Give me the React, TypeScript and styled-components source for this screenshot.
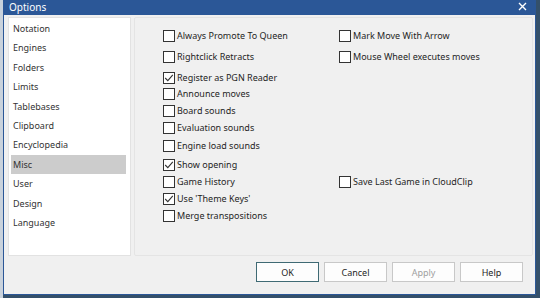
import { FunctionComponent } from "react";
import styled, { createGlobalStyle } from "styled-components";

const GlobalStyle = createGlobalStyle`
  html, body {
    margin: 0;
    padding: 0;
    background: #34506a;
    overflow: hidden;
  }
  * {
    box-sizing: border-box;
  }
`;

const pages = [
  "Notation",
  "Engines",
  "Folders",
  "Limits",
  "Tablebases",
  "Clipboard",
  "Encyclopedia",
  "Misc",
  "User",
  "Design",
  "Language",
];

interface IOption {
  label: string;
  checked?: boolean;
}

interface IRow {
  top: number;
  left: IOption;
  right?: IOption;
}

const rows: IRow[] = [
  {
    top: 11,
    left: { label: "Always Promote To Queen" },
    right: { label: "Mark Move With Arrow" },
  },
  {
    top: 8,
    left: { label: "Rightclick Retracts" },
    right: { label: "Mouse Wheel executes moves" },
  },
  { top: 8, left: { label: "Register as PGN Reader", checked: true } },
  { top: 3, left: { label: "Announce moves" } },
  { top: 4, left: { label: "Board sounds" } },
  { top: 4, left: { label: "Evaluation sounds" } },
  { top: 5, left: { label: "Engine load sounds" } },
  { top: 6, left: { label: "Show opening", checked: true } },
  {
    top: 4,
    left: { label: "Game History" },
    right: { label: "Save Last Game in CloudClip" },
  },
  { top: 4, left: { label: "Use 'Theme Keys'", checked: true } },
  { top: 4, left: { label: "Merge transpositions" } },
];

const CheckOption: FunctionComponent<IOption> = ({ label, checked }) => (
  <OptionLabel>
    <Box>
      {checked && (
        <svg width="10" height="10" viewBox="0 0 10 10">
          <path
            d="M1.2 5 L3.8 7.6 L8.8 1.8"
            fill="none"
            stroke="#333"
            strokeWidth="1.1"
          />
        </svg>
      )}
    </Box>
    <span>{label}</span>
  </OptionLabel>
);

export default function App() {
  return (
    <>
      <GlobalStyle />
      <Screen>
        <BackStrip />
        <Dialog>
          <TitleBar>
            <Title>Options</Title>
            <Close>
              <svg width="9" height="9" viewBox="0 0 9 9">
                <path
                  d="M1 1 L8 8 M8 1 L1 8"
                  stroke="#fff"
                  strokeWidth="1.4"
                />
              </svg>
            </Close>
          </TitleBar>
          <Body>
            <Panels>
              <PageList>
                {pages.map((p) => (
                  <PageItem key={p} selected={p === "Misc"}>
                    {p}
                  </PageItem>
                ))}
              </PageList>
              <Settings>
                {rows.map((row) => (
                  <OptionRow key={row.left.label} top={row.top}>
                    <CheckOption {...row.left} />
                    {row.right ? <CheckOption {...row.right} /> : <span />}
                  </OptionRow>
                ))}
              </Settings>
            </Panels>
            <Buttons>
              <Button primary>OK</Button>
              <Button>Cancel</Button>
              <Button disabled>Apply</Button>
              <Button>Help</Button>
            </Buttons>
          </Body>
        </Dialog>
      </Screen>
    </>
  );
}

const Screen = styled.div`
  width: 540px;
  height: 298px;
  display: flex;
  align-items: flex-start;
  font-family: "Noto Sans", "Open Sans", sans-serif;
  font-size: 9px;
  color: #1f1f1f;
`;

const BackStrip = styled.div`
  width: 3px;
  height: 298px;
  background: #c9d2dc;
`;

const Dialog = styled.div`
  width: 533px;
  height: 295px;
  display: flex;
  flex-direction: column;
  background: #f0f0f0;
  border: 1px solid #2b5797;
  border-top: none;
`;

const TitleBar = styled.div`
  height: 15px;
  flex: 0 0 15px;
  background: #2b5797;
  display: flex;
  align-items: center;
  justify-content: space-between;
  padding: 0 9px 0 6px;
  margin: 0 -1px;
`;

const Title = styled.span`
  color: #ffffff;
  font-size: 10px;
  line-height: 15px;
`;

const Close = styled.span`
  display: flex;
  align-items: center;
  margin-top: -3px;
`;

const Body = styled.div`
  flex: 1;
  display: flex;
  flex-direction: column;
  padding: 2px 2px 0 4px;
`;

const Panels = styled.div`
  height: 239px;
  display: flex;
  gap: 3px;
`;

const PageList = styled.div`
  width: 123px;
  background: #ffffff;
  border: 1px solid #e2e2e2;
  padding: 1px 4px 0 2px;
  display: flex;
  flex-direction: column;
`;

const PageItem = styled.div<{ selected?: boolean }>`
  height: 19.4px;
  line-height: 19.4px;
  padding-left: 2px;
  color: #333333;
  background: ${(p) => (p.selected ? "#cccccc" : "transparent")};
`;

const Settings = styled.div`
  flex: 1;
  border: 1px solid #e4e4e4;
  border-radius: 2px;
  background: #f0f0f0;
  padding: 0 0 0 28px;
`;

const OptionRow = styled.div<{ top: number }>`
  display: grid;
  grid-template-columns: 176px 1fr;
  margin-top: ${(p) => p.top}px;
  height: 13px;
`;

const OptionLabel = styled.label`
  display: flex;
  align-items: center;
  gap: 2px;
  white-space: nowrap;
  line-height: 13px;
`;

const Box = styled.span`
  width: 12px;
  height: 12px;
  flex: 0 0 12px;
  border: 1px solid #333333;
  background: #ffffff;
  display: flex;
  align-items: center;
  justify-content: center;
`;

const Buttons = styled.div`
  display: flex;
  justify-content: flex-end;
  gap: 5px;
  padding: 6px 10px 0 0;
`;

const Button = styled.button<{ primary?: boolean }>`
  width: 63px;
  height: 20px;
  font-family: inherit;
  font-size: 9px;
  background: #fdfdfd;
  color: ${(p) => (p.disabled ? "#a0a0a0" : "#1f1f1f")};
  border: 1px solid ${(p) => (p.primary ? "#3f6a74" : "#c8c8c8")};
  padding: 0;
`;
